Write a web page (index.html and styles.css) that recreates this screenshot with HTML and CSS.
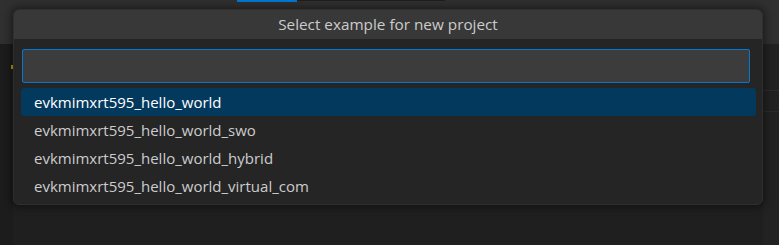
FILE: index.html
```html
<!DOCTYPE html>
<html lang="en">
  <head>
    <meta charset="UTF-8" />
    <title>Select example</title>
    <link rel="stylesheet" href="styles.css">
  </head>
  <body>
    <div class="workbench">
      <!-- title / tab bar -->
      <div class="tabbar">
        <div class="tab-spacer"></div>
        <div class="tab-active"></div>
        <div class="tab-dark"></div>
      </div>
      <div class="editor">
        <div class="gutter"><span class="dot"></span></div>
        <div class="editor-main"></div>
        <div class="side">
          <div class="side-row"></div>
          <div class="side-row"></div>
        </div>
      </div>

      <!-- quick pick -->
      <div class="quick-pick">
        <div class="qp-title">Select example for new project</div>
        <div class="qp-body">
          <div class="qp-input"></div>
          <ul class="qp-list">
            <li class="qp-item selected">evkmimxrt595_hello_world</li>
            <li class="qp-item">evkmimxrt595_hello_world_swo</li>
            <li class="qp-item">evkmimxrt595_hello_world_hybrid</li>
            <li class="qp-item">evkmimxrt595_hello_world_virtual_com</li>
          </ul>
        </div>
      </div>
    </div>
  </body>
</html>
```

FILE: styles.css
```css
html,
body {
  margin: 0;
  padding: 0;
  background-color: #1f1f1f;
}

.workbench {
  position: relative;
  width: 779px;
  height: 245px;
  overflow: hidden;
  display: flex;
  flex-direction: column;
  font-family: "Open Sans", "Noto Sans", sans-serif;
}

.tabbar {
  display: flex;
  height: 44px;
  background-color: #303030;
}

.tab-spacer {
  width: 237px;
}

.tab-active {
  width: 60px;
  height: 2px;
  background-color: #0078d4;
}

.tab-dark {
  width: 148px;
  height: 1px;
  background-color: #1e1e1e;
}

.editor {
  flex: 1;
  display: flex;
}

.gutter {
  width: 13px;
  background-color: #1c1c1c;
  position: relative;
}

.dot {
  position: absolute;
  left: 11px;
  top: 21px;
  width: 3px;
  height: 4px;
  background-color: #b8a300;
}

.editor-main {
  flex: 1;
  background-color: #1f1f1f;
}

.side {
  width: 16px;
  background-color: #222;
  display: flex;
  flex-direction: column;
  gap: 20px;
  padding-top: 46px;
}

.side-row {
  height: 1px;
  background-color: #2c2c2c;
}

/* 浮いているダイアログ */
.quick-pick {
  position: absolute;
  left: 13px;
  top: 9px;
  width: 750px;
  height: 196px;
  border-radius: 6px;
  background-color: #252526;
  border: 1px solid #2f2f2f;
  box-sizing: border-box;
  box-shadow: 0 0 8px 2px rgba(0, 0, 0, 0.45);
  overflow: hidden;
}

.qp-title {
  height: 29px;
  line-height: 29px;
  background-color: #383838;
  color: #cccccc;
  font-size: 15.3px;
  text-align: center;
}

.qp-body {
  padding: 10px 6px 0 7px;
}

.qp-input {
  margin: 0 6px 0 1px;
  height: 34px;
  box-sizing: border-box;
  background-color: #3c3c3c;
  border: 1px solid #0078d4;
  border-radius: 2px;
}

.qp-list {
  list-style: none;
  margin: 5px 0 0;
  padding: 0;
}

.qp-item {
  height: 28px;
  line-height: 28px;
  padding-left: 13px;
  font-size: 15px;
  color: #cccccc;
  border-radius: 3px;
}

.qp-item.selected {
  background-color: #04395e;
  color: #ffffff;
}
```
